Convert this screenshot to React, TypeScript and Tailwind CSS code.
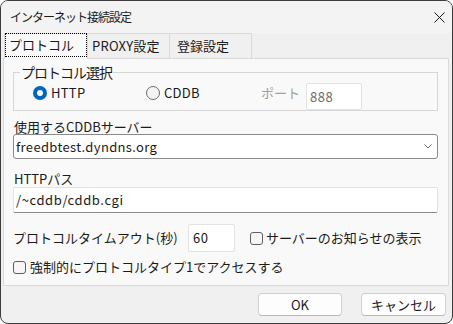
import { ReactNode } from 'react'

const font = "[font-family:'Noto_Sans_CJK_JP',sans-serif]"

function Radio({ checked, label }: { checked?: boolean; label: string }) {
  return (
    <div className="flex items-center gap-[4px] h-[14px]">
      {checked ? (
        <div className="flex h-[14px] w-[14px] items-center justify-center rounded-full bg-[#0067c0]">
          <div className="h-[6px] w-[6px] rounded-full bg-white" />
        </div>
      ) : (
        <div className="h-[14px] w-[14px] rounded-full border border-[#6b6b6b] bg-[#f3f3f3]" />
      )}
      <span className="text-[13px] leading-[14px] tracking-[0.3px] text-[#1b1b1b]">{label}</span>
    </div>
  )
}

function Check({ label, gap }: { label: string; gap: string }) {
  return (
    <div className={`flex items-center ${gap}`}>
      <div className="h-[13px] w-[13px] rounded-[3px] border border-[#5f5f5f] bg-[#f6f6f6]" />
      <span className="text-[13px] leading-[16px] text-[#1b1b1b]">{label}</span>
    </div>
  )
}

function Edit({ className, children }: { className: string; children?: ReactNode }) {
  return (
    <div
      className={`flex items-center bg-white border border-[#e3e3e3] border-b-[#8a8a8a] rounded-[2px] text-[13px] text-[#1b1b1b] ${className}`}
    >
      {children}
    </div>
  )
}

export default function App() {
  return (
    <div
      className={`${font} w-[453px] h-[324px] flex flex-col overflow-hidden rounded-[8px] border border-[#3c3c3c] bg-[#f0f0f0] text-[#1b1b1b]`}
    >
      {/* title bar */}
      <div className="flex h-[32px] shrink-0 items-center justify-between bg-[#f3f3f3] pl-[9px] pr-[7px]">
        <span className="text-[12px] tracking-[-1px] text-[#1b1b1b]">インターネット接続設定</span>
        <svg width="11" height="11" viewBox="0 0 11 11" className="mt-[1px]">
          <path d="M0.5 0.5 L10.5 10.5 M10.5 0.5 L0.5 10.5" stroke="#1b1b1b" strokeWidth="1" fill="none" />
        </svg>
      </div>

      {/* tabs */}
      <div className="flex h-[25px] shrink-0 items-end pl-[3px]">
        <div className="relative z-10 -mb-px h-[26px] w-[84px] border border-b-0 border-[#dadada] bg-[#f9f9f9]">
          <div className="flex h-[24px] items-center border border-dotted border-black pl-[3px] text-[13px] leading-[16px] -mt-[1px]">
            プロトコル
          </div>
        </div>
        <div className="flex h-[25px] w-[82px] items-center border border-b-0 border-l-0 border-[#dadada] pl-[4px] text-[13px] tracking-[0.2px]">
          PROXY設定
        </div>
        <div className="flex h-[25px] w-[82px] items-center border border-b-0 border-l-0 border-[#dadada] pl-[7px] text-[13px]">
          登録設定
        </div>
      </div>

      {/* panel */}
      <div className="ml-[2px] flex h-[228px] w-[446px] shrink-0 flex-col border border-[#dadada] bg-[#f9f9f9] pl-[9px] pr-[10px]">
        {/* group box */}
        <div className="relative mt-[13px] h-[39px] border border-[#d6d6d6]">
          <span className="absolute left-[6px] top-[-10px] bg-[#f9f9f9] px-[1px] text-[14px] leading-[18px] tracking-[-1px]">
            プロトコル選択
          </span>
          <div className="flex items-start pl-[19px]">
            <div className="mt-[13px] w-[113px]">
              <Radio checked label="HTTP" />
            </div>
            <div className="mt-[13px] w-[115px]">
              <Radio label="CDDB" />
            </div>
            <span className="mt-[13px] w-[45px] text-[13px] leading-[14px] text-[#a0a0a0]">ポート</span>
            <Edit className="mt-[10px] h-[27px] w-[56px] border-b-[#e3e3e3] pl-[3px] tracking-[0.5px] text-[#6d6d6d]">888</Edit>
          </div>
        </div>

        {/* server */}
        <div className="mt-[8px] h-[15px] pl-[1px] text-[13px] leading-[15px]">使用するCDDBサーバー</div>
        <div className="flex h-[25px] items-center justify-between rounded-[3px] border border-[#8a8a8a] bg-white pl-[2px] pr-[5px] text-[13px]">
          <span className="tracking-[0.35px]">freedbtest.dyndns.org</span>
          <svg width="8" height="5" viewBox="0 0 8 5">
            <path d="M0.5 0.5 L4 4 L7.5 0.5" stroke="#666" strokeWidth="1" fill="none" />
          </svg>
        </div>

        {/* path */}
        <div className="mt-[12px] h-[15px] pl-[1px] text-[13px] leading-[15px]">HTTPパス</div>
        <Edit className="mt-[1px] h-[26px] pl-[2px] tracking-[0.6px]">/~cddb/cddb.cgi</Edit>

        {/* timeout */}
        <div className="mt-[11px] flex h-[28px] items-center">
          <span className="w-[175px] text-[13px]">プロトコルタイムアウト(秒)</span>
          <Edit className="h-[28px] w-[47px] border-b-[#e3e3e3] pl-[4px] tracking-[0.5px]">60</Edit>
          <div className="ml-[15px]">
            <Check label="サーバーのお知らせの表示" gap="gap-[3px]" />
          </div>
        </div>

        <div className="mt-[7px] h-[16px]">
          <Check label="強制的にプロトコルタイプ1でアクセスする" gap="gap-[4px]" />
        </div>
      </div>

      {/* buttons */}
      <div className="mt-[7px] flex justify-end gap-[19px] pr-[6px]">
        <button className="flex h-[23px] w-[84px] items-center justify-center rounded-[4px] border border-[#d0d0d0] border-b-[#b8b8b8] bg-[#fdfdfd] text-[13px] text-[#1b1b1b]">
          OK
        </button>
        <button className="flex h-[23px] w-[85px] items-center justify-center rounded-[4px] border border-[#d0d0d0] border-b-[#b8b8b8] bg-[#fdfdfd] text-[13px] text-[#1b1b1b]">
          キャンセル
        </button>
      </div>
    </div>
  )
}
